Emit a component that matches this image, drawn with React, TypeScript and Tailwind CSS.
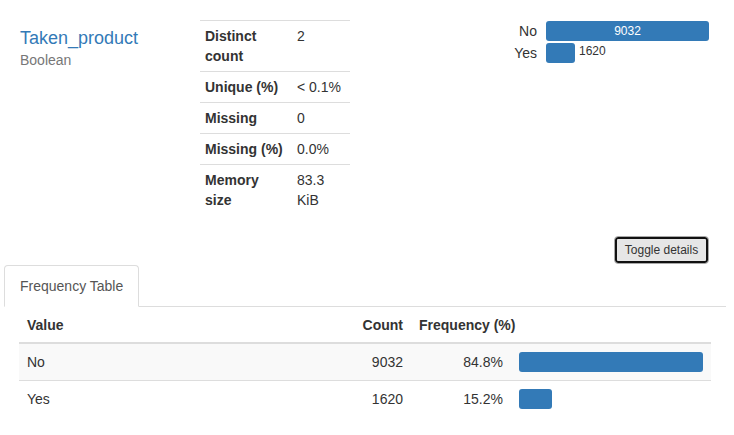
import React from "react";

const font = { fontFamily: '"Liberation Sans", Arial, Helvetica, sans-serif' };

function StatRow({ label, value, first }: { label: React.ReactNode; value: React.ReactNode; first?: boolean }) {
  return (
    <div className="flex border-t border-[#ddd]">
      <div className="w-[92px] p-[5px] font-bold text-[#333]">{label}</div>
      <div className="flex-1 p-[5px] text-[#333]">{value}</div>
    </div>
  );
}

export default function App() {
  const max = 9032;
  const chart = [
    { label: "No", count: 9032 },
    { label: "Yes", count: 1620 },
  ];
  const rows = [
    { v: "No", c: 9032, f: "84.8%" },
    { v: "Yes", c: 1620, f: "15.2%" },
  ];
  return (
    <div className="w-[734px] h-[435px] bg-white text-[14px] leading-[20px] text-[#333] overflow-hidden" style={font}>
      {/* top section */}
      <div className="flex pt-[20px]">
        <div className="w-[200px] pl-[20px]">
          <div className="mt-[8px] text-[18px] leading-[20px] text-[#337ab7]">Taken_product</div>
          <div className="mt-[2px] text-[#777]">Boolean</div>
        </div>
        <div className="w-[150px]">
          <StatRow label={<>Distinct<br />count</>} value="2" first />
          <StatRow label="Unique (%)" value="< 0.1%" />
          <StatRow label="Missing" value="0" />
          <StatRow label="Missing (%)" value="0.0%" />
          <StatRow label={<>Memory<br />size</>} value={<>83.3<br />KiB</>} />
        </div>
        <div className="flex-1 flex justify-end pr-[25px] pt-[1px]">
          <div className="flex flex-col gap-[2px]">
            {chart.map((d) => {
              const w = Math.round((d.count / max) * 163);
              return (
                <div key={d.label} className="flex items-start h-[20px]">
                  <div className="w-[50px] text-right leading-[20px] text-[#333]">{d.label}</div>
                  <div className="ml-[9px] w-[163px] flex items-start">
                    <div
                      className="h-[20px] rounded-[3px] bg-[#337ab7] text-white text-[12px] leading-[20px] text-center"
                      style={{ width: w }}
                    >
                      {d.label === "No" ? "9032" : ""}
                    </div>
                    {d.label === "Yes" && (
                      <span className="ml-[4px] text-[12px] leading-[16px] text-[#333]">1620</span>
                    )}
                  </div>
                </div>
              );
            })}
          </div>
        </div>
      </div>

      {/* toggle button */}
      <div className="flex justify-end pr-[25px] mt-[21px]">
        <button className="h-[28px] w-[95px] rounded-[4px] border border-[#a8a8a8] bg-[#e6e6e6] shadow-[inset_0_0_0_2px_#111] text-[12px] text-[#333]" style={font}>
          Toggle details
        </button>
      </div>

      {/* tabs */}
      <div className="mt-[1px] ml-[4px] mr-[8px] flex border-b border-[#ddd]">
        <div className="-mb-px rounded-t-[4px] border border-[#ddd] border-b-transparent bg-white px-[15px] py-[10px] text-[#555]">
          Frequency Table
        </div>
      </div>

      {/* frequency table */}
      <div className="ml-[19px] w-[692px]">
        <div className="grid grid-cols-[332px_60px_100px_200px] border-b-2 border-[#ddd] font-bold text-[#333]">
          <div className="px-[8px] pt-[8px] pb-[7px]">Value</div>
          <div className="px-[8px] pt-[8px] pb-[7px] text-right">Count</div>
          <div className="col-span-2 px-[8px] pt-[8px] pb-[7px]">Frequency (%)</div>
        </div>
        {rows.map((r, i) => (
          <div
            key={r.v}
            className={`grid grid-cols-[332px_60px_100px_200px] ${i === 0 ? "bg-[#f9f9f9]" : "border-t border-[#ddd]"}`}
          >
            <div className="p-[8px]">{r.v}</div>
            <div className="p-[8px] text-right">{r.c}</div>
            <div className="p-[8px] text-right">{r.f}</div>
            <div className="p-[8px]">
              <div className="h-[20px] rounded-[3px] bg-[#337ab7]" style={{ width: Math.round((r.c / max) * 184) }} />
            </div>
          </div>
        ))}
      </div>
    </div>
  );
}
